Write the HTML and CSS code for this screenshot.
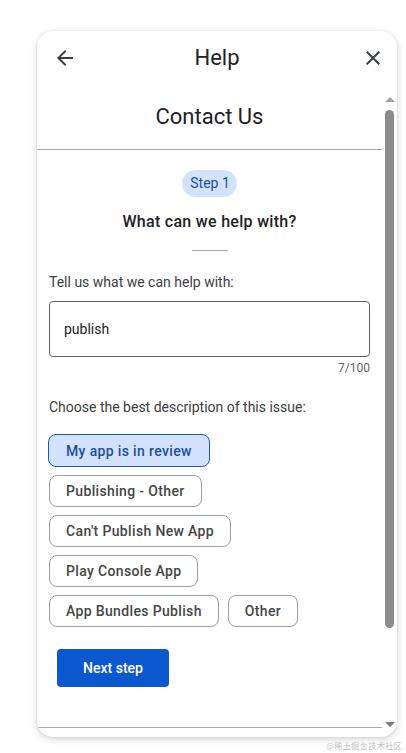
FILE: index.html
```html
<!DOCTYPE html>
<html lang="en">
<head>
<meta charset="utf-8">
<title>Help - Contact Us</title>
<link rel="stylesheet" href="styles.css">
</head>
<body>
<div class="page">
  <div class="card">
    <header class="topbar">
      <button class="icon-btn" aria-label="Back">
        <svg width="24" height="24" viewBox="0 0 24 24"><path d="M20 11H7.83l5.59-5.59L12 4l-8 8 8 8 1.41-1.41L7.83 13H20v-2z" fill="#3c4043"/></svg>
      </button>
      <div class="topbar-title">Help</div>
      <button class="icon-btn" aria-label="Close">
        <svg width="24" height="24" viewBox="0 0 24 24"><path d="M19 6.41 17.59 5 12 10.59 6.41 5 5 6.41 10.59 12 5 17.59 6.41 19 12 13.41 17.59 19 19 17.59 13.41 12z" fill="#3c4043"/></svg>
      </button>
    </header>
    <div class="main">
      <div class="scroll">
        <div class="scroll-inner">
          <h1 class="page-title">Contact Us</h1>
          <div class="rule"></div>
          <div class="form">
            <div class="step-wrap"><span class="step">Step 1</span></div>
            <h2 class="question">What can we help with?</h2>
            <div class="short-rule"></div>
            <label class="label">Tell us what we can help with:</label>
            <div class="input">publish</div>
            <div class="counter">7/100</div>
            <div class="label label-2">Choose the best description of this issue:</div>
            <div class="chips">
              <div class="chip-row"><span class="chip selected">My app is in review</span></div>
              <div class="chip-row"><span class="chip">Publishing - Other</span></div>
              <div class="chip-row"><span class="chip">Can't Publish New App</span></div>
              <div class="chip-row"><span class="chip">Play Console App</span></div>
              <div class="chip-row"><span class="chip">App Bundles Publish</span><span class="chip">Other</span></div>
            </div>
            <button class="next">Next step</button>
          </div>
        </div>
        <div class="bottom-rule"></div>
      </div>
      <div class="scrollbar">
        <div class="arrow-up"></div>
        <div class="thumb"></div>
        <div class="track-rest"></div>
        <div class="arrow-down"></div>
      </div>
    </div>
    <div class="card-foot"></div>
  </div>
  <div class="watermark">@稀土掘金技术社区</div>
</div>
</body>
</html>
```

FILE: styles.css
```css
* { box-sizing: border-box; }
html, body { margin: 0; padding: 0; background: #ffffff; }
body {
  font-family: Roboto, "Noto Sans", Arial, sans-serif;
  color: #3c4043;
  width: 406px;
  height: 753px;
  overflow: hidden;
}
.page {
  padding: 31px 9px 0 37px;
  position: relative;
  height: 753px;
}
.card {
  width: 360px;
  height: 706px;
  border-radius: 16px;
  background: #fff;
  box-shadow: 0 2px 7px rgba(0,0,0,0.18), 0 0 2px rgba(0,0,0,0.08);
  display: flex;
  flex-direction: column;
  overflow: hidden;
}
.topbar {
  height: 62px;
  flex: none;
  display: flex;
  align-items: center;
  justify-content: space-between;
  padding: 0 12px 8px 16px;
}
.icon-btn {
  border: 0;
  background: none;
  padding: 0;
  width: 24px;
  height: 24px;
  display: flex;
  align-items: center;
  justify-content: center;
}
.topbar-title {
  font-size: 22px;
  color: #202124;
  line-height: 28px;
  margin-right: 4px;
}
.main {
  flex: 1;
  display: flex;
  min-height: 0;
}
.scroll {
  flex: 1;
  display: flex;
  flex-direction: column;
  min-width: 0;
}
.scroll-inner {
  flex: 1;
  overflow: hidden;
}
.page-title {
  margin: 0;
  padding: 10px 0 18px;
  text-align: center;
  font-size: 22px;
  line-height: 28px;
  font-weight: 400;
  color: #202124;
}
.rule {
  height: 1px;
  background: #a8abaf;
}
.bottom-rule {
  height: 1px;
  background: #a8abaf;
  flex: none;
}
.form {
  padding: 20px 12px 0 12px;
  display: flex;
  flex-direction: column;
}
.step-wrap { text-align: center; }
.step {
  display: inline-block;
  height: 27px;
  line-height: 27px;
  padding: 0 7px 0 8px;
  border-radius: 14px;
  background: #d3e3fd;
  color: #1f4d9e;
  font-size: 14px;
}
.question {
  margin: 15px 0 0;
  text-align: center;
  font-size: 16px;
  line-height: 20px;
  font-weight: 500;
  letter-spacing: 0.3px;
  color: #202124;
}
.short-rule {
  width: 36px;
  height: 1px;
  background: #a8abaf;
  margin: 18px auto 0;
}
.label {
  display: block;
  margin-top: 21px;
  font-size: 14px;
  line-height: 20px;
  color: #3c4043;
}
.input {
  margin-top: 9px;
  height: 56px;
  border: 1px solid #5f6368;
  border-radius: 4px;
  padding: 0 14px;
  display: flex;
  align-items: center;
  font-size: 14px;
  color: #202124;
}
.counter {
  margin-top: 3px;
  text-align: right;
  font-size: 12px;
  line-height: 16px;
  color: #5f6368;
}
.label-2 { margin-top: 21px; }
.chips {
  margin-top: 17px;
  display: flex;
  flex-direction: column;
  gap: 8px;
  margin-left: -1px;
}
.chip-row {
  display: flex;
  gap: 8px;
}
.chip {
  height: 32px;
  padding: 0 16px;
  border: 1px solid #9aa0a6;
  border-radius: 8px;
  display: inline-flex;
  align-items: center;
  font-size: 14px;
  font-weight: 500;
  letter-spacing: 0.35px;
  color: #444746;
  background: #fff;
  margin-left: 1px;
}
.chip.selected {
  height: 33px;
  margin-left: 0;
  padding: 0 17px;
  background: #d3e3fd;
  border-color: #1a57c0;
  color: #1f4d9e;
}
.next {
  align-self: flex-start;
  margin: 22px 0 0 8px;
  width: 112px;
  height: 38px;
  border: 0;
  border-radius: 4px;
  background: #0b57d0;
  color: #fff;
  font-family: Roboto, "Noto Sans", Arial, sans-serif;
  font-size: 14px;
  font-weight: 500;
  padding: 0;
}
.scrollbar {
  width: 9px;
  margin: 4px 3px 0 3px;
  display: flex;
  flex-direction: column;
  align-items: center;
  flex: none;
}
.arrow-up {
  width: 0; height: 0;
  border-left: 5px solid transparent;
  border-right: 5px solid transparent;
  border-bottom: 5px solid #a3a3a3;
}
.thumb {
  margin-top: 8px;
  width: 9px;
  height: 518px;
  border-radius: 5px;
  background: #8c8c8c;
}
.track-rest { flex: 1; }
.arrow-down {
  width: 0; height: 0;
  border-left: 5px solid transparent;
  border-right: 5px solid transparent;
  border-top: 5px solid #7d7d7d;
  margin-bottom: 1px;
}
.card-foot {
  height: 9px;
  flex: none;
}
.watermark {
  position: absolute;
  right: 4px;
  top: 738px;
  font-family: "Noto Sans CJK SC", sans-serif;
  font-size: 8.5px;
  line-height: 14px;
  color: #c4c4c4;
}
```
